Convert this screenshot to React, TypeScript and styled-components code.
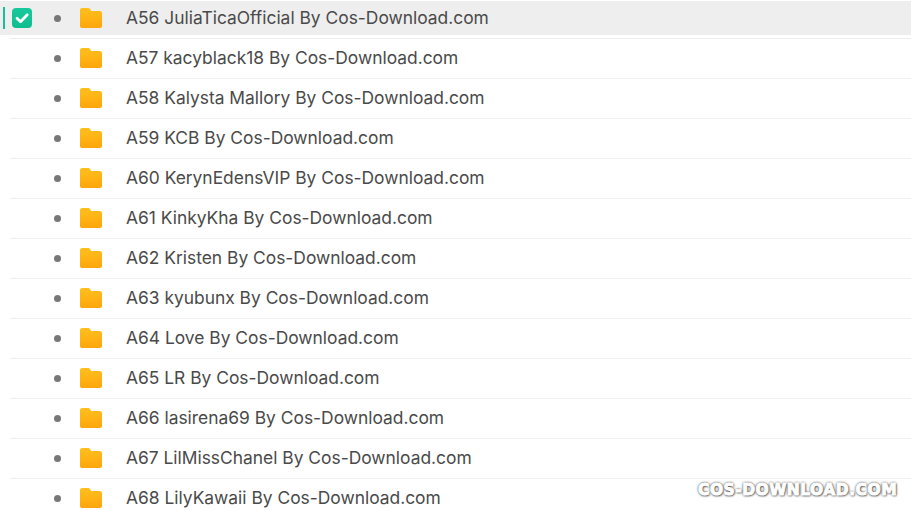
import React from 'react';
import styled, { createGlobalStyle } from 'styled-components';

const folders = [
  'A56 JuliaTicaOfficial By Cos-Download.com',
  'A57 kacyblack18 By Cos-Download.com',
  'A58 Kalysta Mallory By Cos-Download.com',
  'A59 KCB By Cos-Download.com',
  'A60 KerynEdensVIP By Cos-Download.com',
  'A61 KinkyKha By Cos-Download.com',
  'A62 Kristen By Cos-Download.com',
  'A63 kyubunx By Cos-Download.com',
  'A64 Love By Cos-Download.com',
  'A65 LR By Cos-Download.com',
  'A66 lasirena69 By Cos-Download.com',
  'A67 LilMissChanel By Cos-Download.com',
  'A68 LilyKawaii By Cos-Download.com',
];

const FolderIcon: React.FC = () => (
  <FolderSvg viewBox="0 0 22 20" width="22" height="20">
    <defs>
      <linearGradient id="folderFill" x1="0" y1="0" x2="0" y2="1">
        <stop offset="0" stopColor="#ffc01e" />
        <stop offset="1" stopColor="#ffa50c" />
      </linearGradient>
    </defs>
    <path
      d="M2 0h6.200c.8 0 1.300.3 1.800.9L11.300 3H20c1.100 0 2 .9 2 2v13c0 1.100-.9 2-2 2H2c-1.100 0-2-.9-2-2V2C0 .9.9 0 2 0z"
      fill="url(#folderFill)"
    />
  </FolderSvg>
);

const App: React.FC = () => (
  <Page>
    <GlobalStyle />
    <List>
      {folders.map((name, i) => (
        <Row key={name} selected={i === 0}>
          <CheckCell>
            {i === 0 && (
              <Checkbox>
                <svg viewBox="0 0 20 20" width="20" height="20">
                  <path
                    d="M5 10.200l3.500 3.500 6.700-7"
                    fill="none"
                    stroke="#fff"
                    strokeWidth="2.800"
                    strokeLinecap="round"
                    strokeLinejoin="round"
                  />
                </svg>
              </Checkbox>
            )}
          </CheckCell>
          <Dot />
          <FolderIcon />
          <Name>{name}</Name>
        </Row>
      ))}
    </List>
    <Watermark>COS-DOWNLOAD.COM</Watermark>
  </Page>
);

export default App;

const GlobalStyle = createGlobalStyle`
  html, body {
    margin: 0;
    padding: 0;
    background: #fff;
    overflow: hidden;
  }
`;

const Page = styled.div`
  position: relative;
  width: 911px;
  height: 510px;
  overflow: hidden;
  font-family: Inter, "Liberation Sans", sans-serif;
`;

const List = styled.div`
  margin-top: -1px;
  padding-left: 10px;
`;

const Row = styled.div<{ selected?: boolean }>`
  position: relative;
  z-index: 0;
  display: flex;
  align-items: center;
  height: 38px;
  padding-bottom: 1px;
  border-bottom: 1px solid #eeeeee;

  ${({ selected }) =>
    selected &&
    `
    &::before {
      content: '';
      position: absolute;
      z-index: -1;
      inset: 2px 0 3px -10px;
      background: #eeeeee;
    }
    &::after {
      content: '';
      position: absolute;
      left: -7px;
      top: 8px;
      width: 2px;
      height: 22px;
      background: #12c29a;
    }
  `}
`;

const CheckCell = styled.div`
  width: 44px;
  padding-left: 2px;
  box-sizing: border-box;
  height: 20px;
`;

const Checkbox = styled.div`
  width: 20px;
  height: 20px;
  border-radius: 4px;
  background: linear-gradient(180deg, #19c99d, #0fbd8f);

  svg {
    display: block;
  }
`;

const Dot = styled.span`
  width: 7px;
  height: 7px;
  border-radius: 50%;
  background: #777777;
  margin-right: 19px;
`;

const FolderSvg = styled.svg`
  flex: none;
  margin-right: 24px;
`;

const Name = styled.span`
  font-size: 17.400px;
  color: #4a4a4a;
  white-space: nowrap;
  margin-bottom: 2px;
`;

const Watermark = styled.div`
  position: absolute;
  left: 698px;
  top: 480px;
  font-family: "DejaVu Sans", sans-serif;
  font-weight: 700;
  font-size: 15.500px;
  letter-spacing: 0.500px;
  line-height: 20px;
  color: #fff;
  white-space: nowrap;
  -webkit-text-stroke: 1px #fff;
  text-shadow: 0 0 2px #333, 0 0 3px #555, 1px 1px 2px #666;
`;
